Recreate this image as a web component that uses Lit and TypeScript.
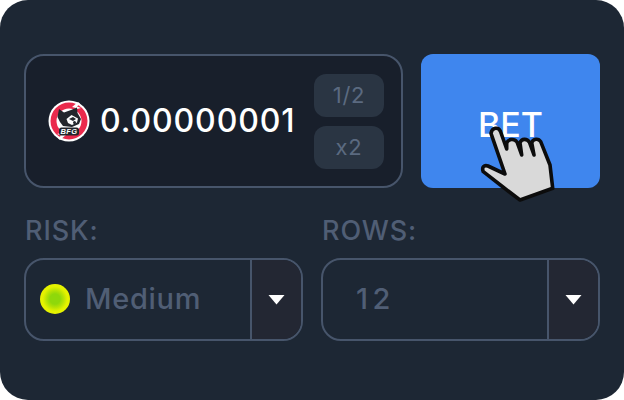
import { LitElement, html, css, svg } from "lit";
import { customElement } from "lit/decorators.js";

@customElement("app-root")
export class AppRoot extends LitElement {
  static styles = css`
    :host { display: block; width: 624px; height: 400px; background: #fff; font-family: Inter, "Noto Sans", sans-serif; }
    .card { box-sizing: border-box; width: 624px; height: 400px; background: #1d2734; border-radius: 28px; padding: 54px 24px 0; display: flex; flex-direction: column; }
    .top { display: flex; gap: 18px; height: 134px; }
    .amount { box-sizing: border-box; width: 379px; background: #181f2b; border: 2px solid #47556b; border-radius: 20px; display: flex; align-items: center; padding: 0 17px 0 22px; }
    .coin { width: 42px; height: 42px; flex: none; display: block; }
    .value { flex: 1; margin-left: 10px; color: #fff; font-size: 32px; font-weight: 500; letter-spacing: 0.9px; white-space: nowrap; padding-bottom: 1px; }
    .chips { display: flex; flex-direction: column; gap: 9px; }
    .chip { width: 70px; height: 43px; background: #2a3543; border-radius: 12px; display: flex; align-items: center; justify-content: center; color: #5b6a80; font-size: 22px; letter-spacing: 0.8px; }
    .bet { position: relative; flex: 1; background: #3f86ee; border-radius: 12px; display: flex; align-items: center; justify-content: center; color: #fff; font-size: 34px; font-weight: 500; padding-top: 6px; box-sizing: border-box; }
    .hand { position: absolute; left: 59px; top: 70px; width: 76px; height: 84px; display: block; overflow: visible; }
    .bottom { display: flex; gap: 18px; margin-top: 29px; }
    .col { flex: 1; display: flex; flex-direction: column; gap: 13px; }
    .label { color: #505e75; font-size: 27px; font-weight: 500; line-height: 28px; height: 28px; padding-left: 1px; letter-spacing: 0.9px; }
    .select { box-sizing: border-box; height: 83px; border: 2px solid #47556b; border-radius: 20px; display: flex; overflow: hidden; }
    .main { flex: 1; display: flex; align-items: center; color: #505e75; font-size: 29px; font-weight: 500; padding-bottom: 2px; }
    .main.risk { padding-left: 14px; gap: 15px; letter-spacing: 0.7px; }
    .main.rows { padding-left: 33px; letter-spacing: 4.5px; }
    .dot { width: 30px; height: 30px; border-radius: 50%; background: radial-gradient(circle, #8fd80a 0 24%, #b5e205 40%, #e4f200 58%, #eef800 100%); }
    .arrow { box-sizing: border-box; width: 51px; padding-right: 1px; border-left: 2px solid #47556b; background: #232733; display: flex; align-items: center; justify-content: center; }
    .arrow svg { width: 17px; height: 11px; display: block; }
    .bfg { font-family: "Liberation Sans", sans-serif; font-size: 7.5px; font-weight: 700; font-style: italic; fill: #fff; letter-spacing: 0.4px; }
  `;

  private arrow() {
    return html`<div class="arrow"><svg viewBox="0 0 17 11"><path d="M0.5 1H16.5L8.5 10.5Z" fill="#fff" /></svg></div>`;
  }

  private coin() {
    return html`<svg class="coin" viewBox="0 0 42 42">
      <circle cx="21" cy="21" r="20.5" fill="#fff" />
      <circle cx="21" cy="21" r="18.5" fill="#ea2a4c" />
      <path d="M30 2 L24 7 L28 8 L25 10 L33 8 L29 6.5 L32 3.5Z M12 40 L18 35 L14 34 L17 32 L9 34 L13 35.5 L10 38.5Z" fill="#fff" />
      <circle cx="21" cy="21" r="12.5" fill="#fff" />
      <path d="M9.5 17 L11 9 L16 12.5 L23 10 L29 7.5 L29.5 13 L33 19 L31 24 L24 27 L15 26 L12 22Z" fill="#23262c" />
      <path d="M18.5 19 L23.5 15 L30 18.5 L29 22.5 L24 25 L20 23Z" fill="#fff" />
      <path d="M21 19 L25 17 L28 19 L25 21Z" fill="#23262c" />
      <circle cx="26.5" cy="22.5" r="1.5" fill="#23262c" />
      <rect x="11" y="27.5" width="20" height="8" rx="2.5" fill="#23262c" />
      <text class="bfg" x="21" y="34.2" text-anchor="middle">BFG</text>
    </svg>`;
  }

  private hand() {
    return svg`<path d="M11 9.3 C12 3.5 18.5 2.5 20.5 7.5 L26.7 25 L26.7 19.3 C28 15 34 14 37 18 L41.7 31 L40 18.7 C41.5 14.5 47 14 49.5 18.5 L54 31 L51.7 18.7 C53 14.5 58.5 14 60.7 17.7 L70 41 L72.7 64.3 L40 76 L23.3 63.3 L3.3 47.7 C1.5 43.5 4 40.5 8 42 L25 50 Z"
      fill="#d9d9d9" stroke="#0c0c0c" stroke-width="3.6" stroke-linejoin="round" />`;
  }

  render() {
    return html`<div class="card">
      <div class="top">
        <div class="amount">
          ${this.coin()}
          <div class="value">0.00000001</div>
          <div class="chips"><div class="chip">1/2</div><div class="chip">x2</div></div>
        </div>
        <div class="bet">BET
          <svg class="hand" viewBox="0 0 76 84">${this.hand()}</svg>
        </div>
      </div>
      <div class="bottom">
        <div class="col">
          <div class="label">RISK:</div>
          <div class="select"><div class="main risk"><span class="dot"></span>Medium</div>${this.arrow()}</div>
        </div>
        <div class="col">
          <div class="label">ROWS:</div>
          <div class="select"><div class="main rows">12</div>${this.arrow()}</div>
        </div>
      </div>
    </div>`;
  }
}
